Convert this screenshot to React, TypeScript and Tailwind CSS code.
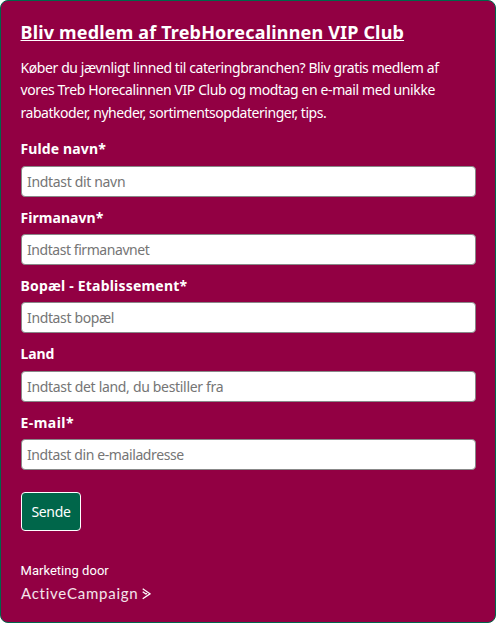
const intro = [
  { text: 'Køber du jævnligt linned til cateringbranchen? Bliv gratis medlem af', tracking: 'tracking-[-0.4px]' },
  { text: 'vores Treb Horecalinnen VIP Club og modtag en e-mail med unikke', tracking: 'tracking-[-0.4px]' },
  { text: 'rabatkoder, nyheder, sortimentsopdateringer, tips.', tracking: 'tracking-[-0.46px]' },
];

const fields = [
  { label: 'Fulde navn*', labelTracking: 'tracking-[0.13px]', placeholder: 'Indtast dit navn', tracking: 'tracking-[-0.33px]' },
  { label: 'Firmanavn*', labelTracking: 'tracking-[0.05px]', placeholder: 'Indtast firmanavnet', tracking: 'tracking-[-0.44px]' },
  { label: 'Bopæl - Etablissement*', labelTracking: 'tracking-[0.2px]', placeholder: 'Indtast bopæl', tracking: 'tracking-[-0.36px]' },
  { label: 'Land', labelTracking: 'tracking-[-0.1px]', placeholder: 'Indtast det land, du bestiller fra', tracking: 'tracking-[-0.32px]' },
  { label: 'E-mail*', labelTracking: 'tracking-[0.45px]', placeholder: 'Indtast din e-mailadresse', tracking: 'tracking-[-0.39px]' },
];

export default function App() {
  return (
    <div className="h-[623px] w-[496px] bg-white font-['Noto_Sans',sans-serif] text-white">
      <form className="flex h-full flex-col items-start rounded-[8px] border border-[#00664a] bg-[#920043] pt-[16px] pr-[19px] pl-[20px]">
        <h1 className="-ml-[0.5px] text-[18px] leading-[30px] font-bold tracking-[0.17px] whitespace-nowrap underline decoration-1 underline-offset-[1px] [text-decoration-skip-ink:none]">
          Bliv medlem af TrebHorecalinnen VIP Club
        </h1>
        <div className="mt-[10px] -ml-[0.5px] text-[14px] leading-[22.4px] whitespace-nowrap">
          {intro.map((line) => (
            <p key={line.text} className={line.tracking}>{line.text}</p>
          ))}
        </div>
        <div className="mt-[15px] flex w-full flex-col">
          {fields.map((f) => (
            <label key={f.label} className="block h-[68.35px] text-[14px] leading-[20px] font-bold">
              <span className={`block -ml-[0.5px] ${f.labelTracking}`}>{f.label}</span>
              <input
                placeholder={f.placeholder}
                className={`mt-[6.3px] block h-[31px] w-full rounded-[4px] border border-[#888888] bg-white px-[5px] text-[14px] font-normal placeholder:text-[#757575] ${f.tracking}`}
              />
            </label>
          ))}
        </div>
        <button type="button" className="mt-[11px] h-[39px] w-[60px] rounded-[4px] border border-white bg-[#00664a] text-[14px] tracking-[-0.3px]">
          Sende
        </button>
        <div className="mt-[30px] -ml-[0.5px] font-[Roboto,sans-serif] text-[13px] leading-[20px] tracking-[0.03px]">Marketing door</div>
        <div className="mt-[2px] flex h-[20px] items-center gap-[4px]">
          <span className="w-[117px] font-[Lato,sans-serif] text-[15px] leading-[20px] font-normal tracking-[0.75px] text-white/90 whitespace-nowrap">ActiveCampaign</span>
          <svg width="9" height="12" viewBox="0 0 9 12" fill="none" stroke="currentColor" strokeWidth="1.3" className="mt-[2px]">
            <path d="M0.7 0.8 8 5.8 0.7 10.8M0.7 3.8 3.9 6 5 5.2" />
          </svg>
        </div>
      </form>
    </div>
  );
}
